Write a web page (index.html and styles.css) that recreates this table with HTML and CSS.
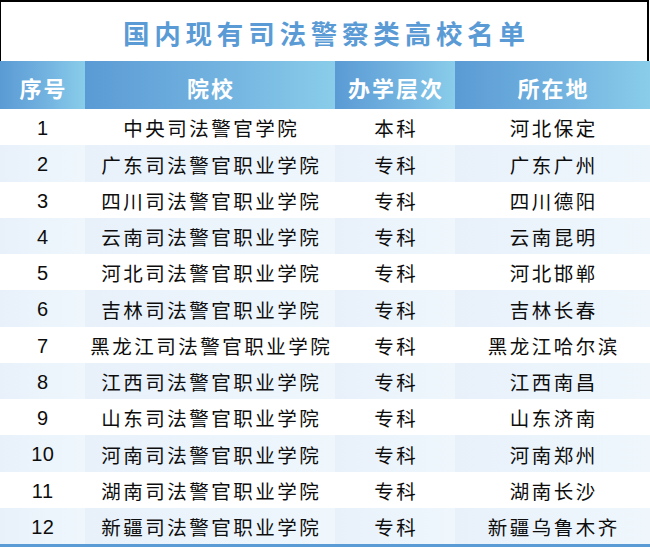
FILE: index.html
```html
<!DOCTYPE html>
<html lang="zh-CN">
<head>
<meta charset="utf-8">
<title>国内现有司法警察类高校名单</title>
<link rel="stylesheet" href="styles.css">
</head>
<body>
<div class="sheet">
  <div class="title"><span>国内现有司法警察类高校名单</span></div>
  <div class="table">
    <div class="row head">
      <div class="cell"><span>序号</span></div>
      <div class="cell"><span>院校</span></div>
      <div class="cell"><span>办学层次</span></div>
      <div class="cell"><span>所在地</span></div>
    </div>
    <div class="row"><div class="cell num">1</div><div class="cell"><span>中央司法警官学院</span></div><div class="cell"><span>本科</span></div><div class="cell"><span>河北保定</span></div></div>
    <div class="row alt"><div class="cell num">2</div><div class="cell"><span>广东司法警官职业学院</span></div><div class="cell"><span>专科</span></div><div class="cell"><span>广东广州</span></div></div>
    <div class="row"><div class="cell num">3</div><div class="cell"><span>四川司法警官职业学院</span></div><div class="cell"><span>专科</span></div><div class="cell"><span>四川德阳</span></div></div>
    <div class="row alt"><div class="cell num">4</div><div class="cell"><span>云南司法警官职业学院</span></div><div class="cell"><span>专科</span></div><div class="cell"><span>云南昆明</span></div></div>
    <div class="row"><div class="cell num">5</div><div class="cell"><span>河北司法警官职业学院</span></div><div class="cell"><span>专科</span></div><div class="cell"><span>河北邯郸</span></div></div>
    <div class="row alt"><div class="cell num">6</div><div class="cell"><span>吉林司法警官职业学院</span></div><div class="cell"><span>专科</span></div><div class="cell"><span>吉林长春</span></div></div>
    <div class="row"><div class="cell num">7</div><div class="cell"><span>黑龙江司法警官职业学院</span></div><div class="cell"><span>专科</span></div><div class="cell"><span>黑龙江哈尔滨</span></div></div>
    <div class="row alt"><div class="cell num">8</div><div class="cell"><span>江西司法警官职业学院</span></div><div class="cell"><span>专科</span></div><div class="cell"><span>江西南昌</span></div></div>
    <div class="row"><div class="cell num">9</div><div class="cell"><span>山东司法警官职业学院</span></div><div class="cell"><span>专科</span></div><div class="cell"><span>山东济南</span></div></div>
    <div class="row alt"><div class="cell num">10</div><div class="cell"><span>河南司法警官职业学院</span></div><div class="cell"><span>专科</span></div><div class="cell"><span>河南郑州</span></div></div>
    <div class="row"><div class="cell num">11</div><div class="cell"><span>湖南司法警官职业学院</span></div><div class="cell"><span>专科</span></div><div class="cell"><span>湖南长沙</span></div></div>
    <div class="row alt"><div class="cell num">12</div><div class="cell"><span>新疆司法警官职业学院</span></div><div class="cell"><span>专科</span></div><div class="cell"><span>新疆乌鲁木齐</span></div></div>
  </div>
</div>
</body>
</html>
```
FILE: styles.css
```css
html, body {
  margin: 0;
  padding: 0;
  background: #ffffff;
}
body {
  font-family: "Noto Sans CJK SC", "Noto Sans", sans-serif;
  width: 650px;
  height: 547px;
  overflow: hidden;
}
.sheet {
  width: 650px;
}
.title {
  box-sizing: border-box;
  width: 649px;
  height: 61px;
  border-top: 2px solid #000;
  border-left: 1px solid #000;
  border-right: 2px solid #000;
  display: flex;
  align-items: center;
  justify-content: center;
  padding-top: 4px;
  color: #5b9bd5;
  font-weight: bold;
  font-size: 26.5px;
  letter-spacing: 4.8px;
  line-height: 1;
}
.title span {
  margin-right: -4.8px;
}
.table {
  display: grid;
  grid-template-columns: 85px 250px 120px 195px;
  grid-template-rows: 48px repeat(12, 36.25px);
  border-bottom: 3px solid #5b9bd5;
}
.row {
  display: contents;
}
.cell {
  display: flex;
  align-items: center;
  justify-content: center;
  font-size: 19.5px;
  letter-spacing: 2.5px;
  color: #0d0d0d;
  line-height: 1;
  white-space: nowrap;
  padding-top: 2px;
}
.cell span {
  margin-right: -2.5px;
}
.cell.num {
  letter-spacing: 0.5px;
  font-family: "Liberation Sans", "Noto Sans", sans-serif;
  font-size: 20px;
  padding-left: 0.5px;
}
.head .cell {
  background: linear-gradient(to right, #5b9bd5 0%, #72b3e0 55%, #89cdea 100%);
  color: #ffffff;
  font-weight: bold;
  font-size: 22px;
  letter-spacing: 2px;
  padding-top: 4px;
}
.head .cell span {
  margin-right: -2px;
}
.alt .cell {
  background: linear-gradient(to right, #e8f1fa 0%, #eff7fd 100%);
}
```
